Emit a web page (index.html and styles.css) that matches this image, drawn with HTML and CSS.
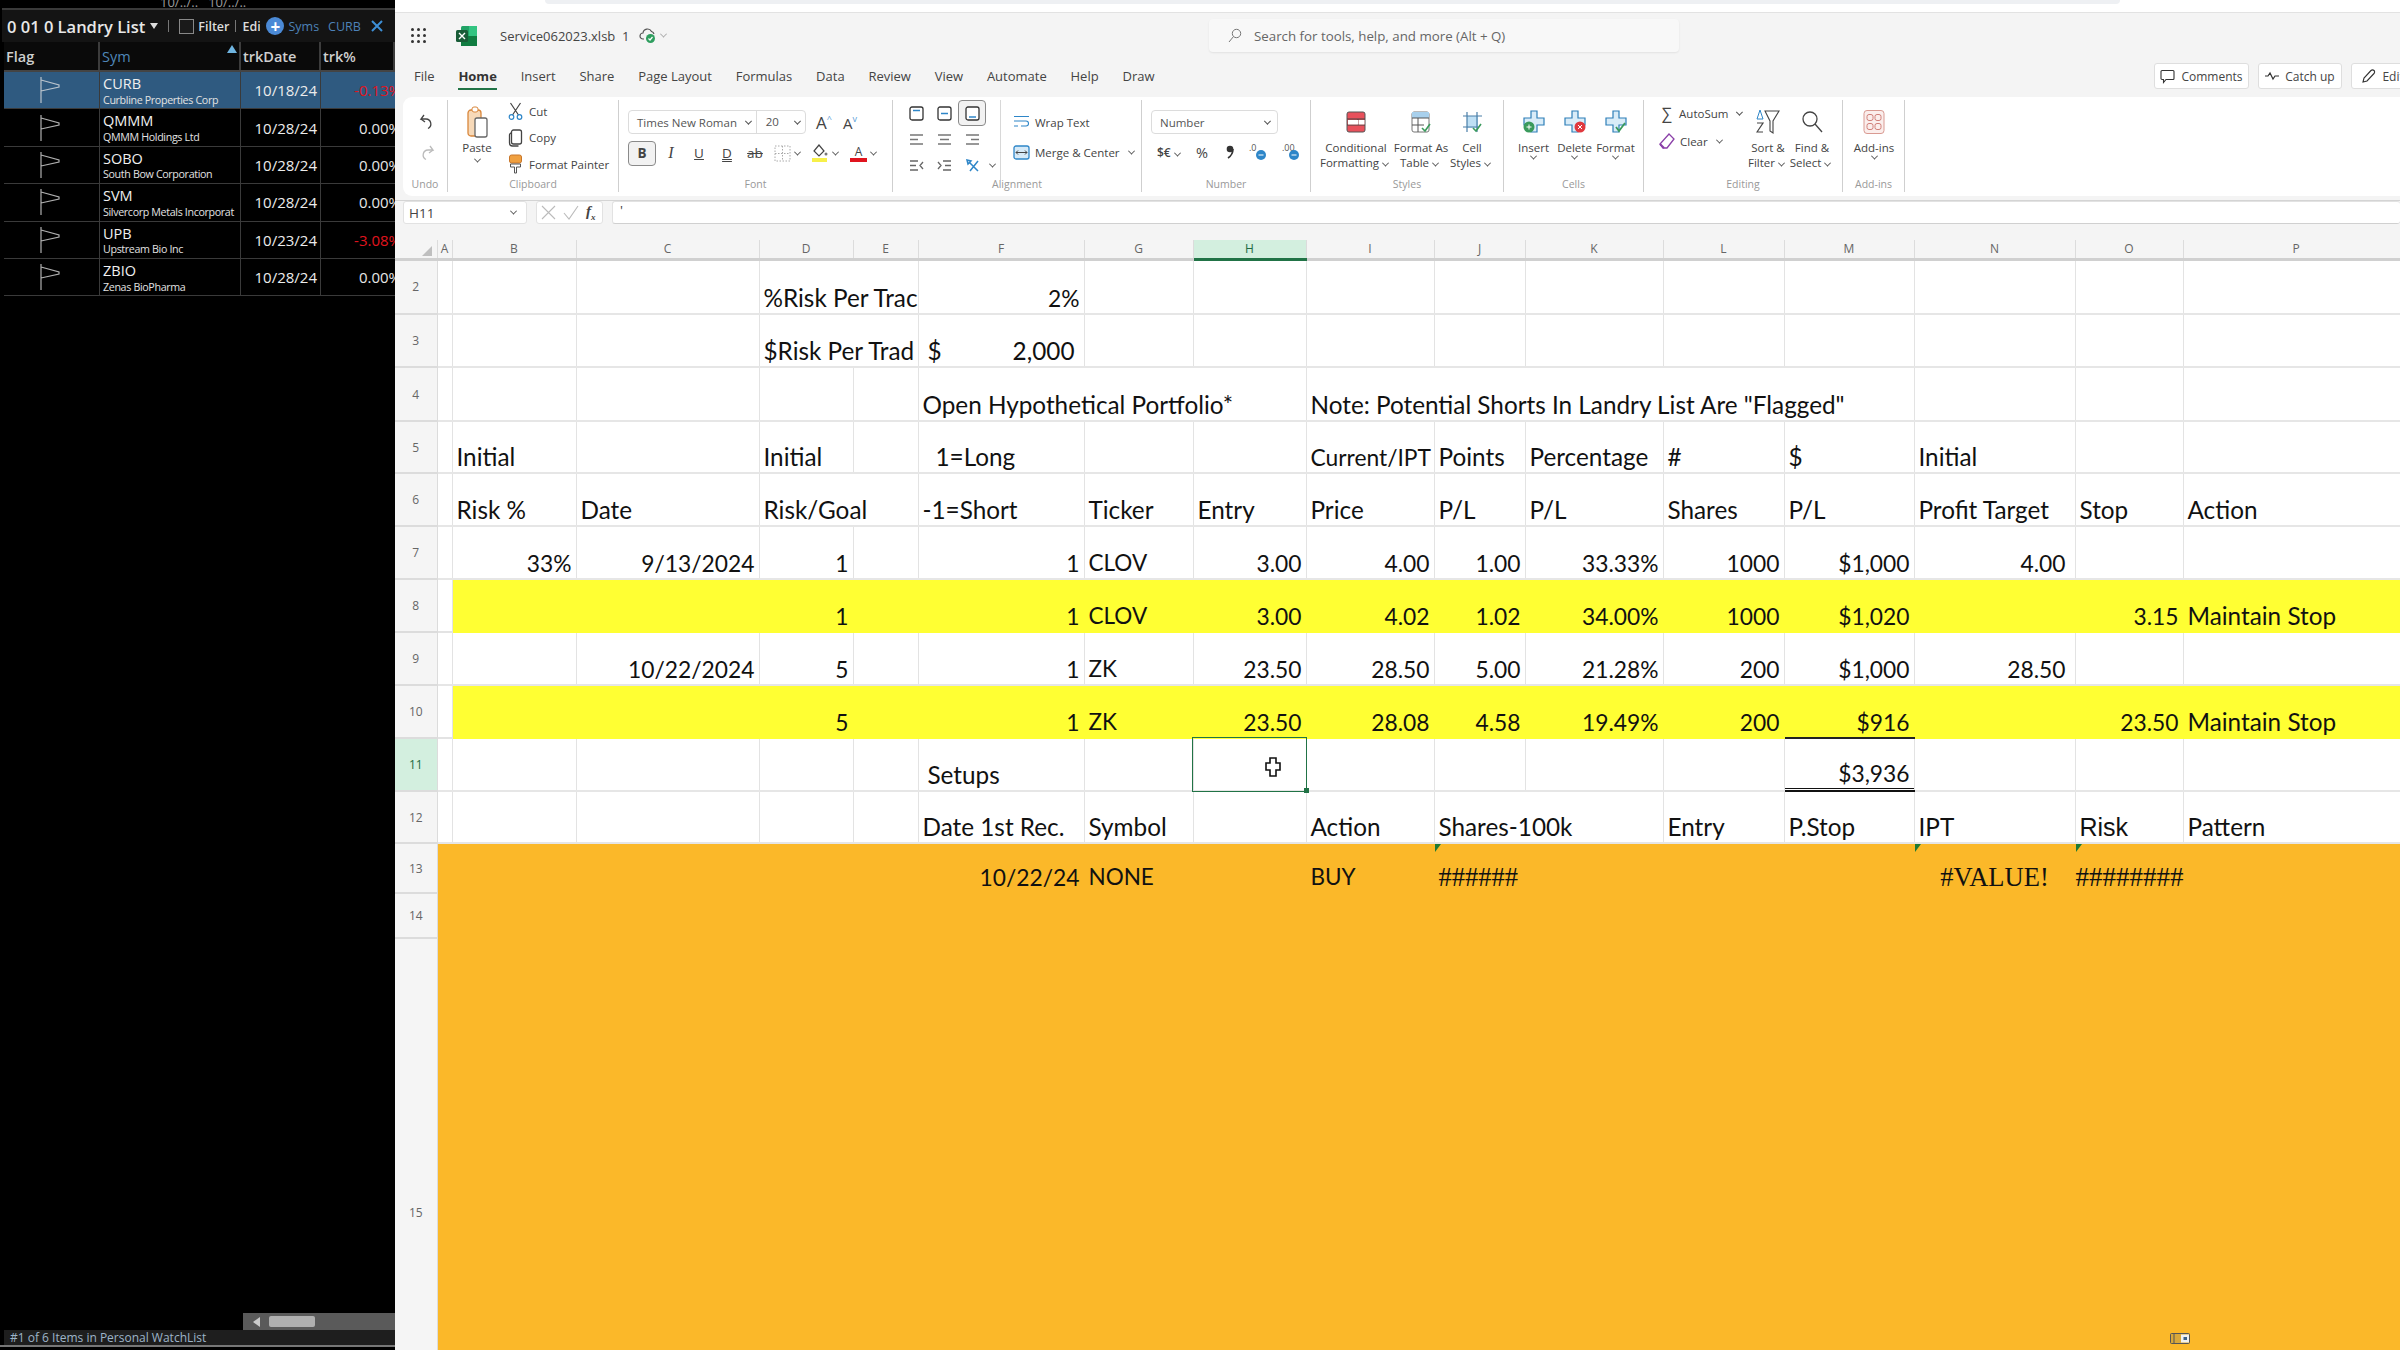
FILE: index.html
```html
<!DOCTYPE html>
<html lang="en">

<head>
  <meta charset="UTF-8">
  <title>Service062023.xlsb</title>
  <link rel="stylesheet" href="styles.css">
</head>

<body>
  <!-- watchlist -->
  <aside class="watch">
    <div class="watch-top">10/../.. &nbsp; 10/../..</div>
    <div class="watch-title">
      <span class="wl-name">0 01 0 Landry List</span><span class="wl-caret"></span>
      <span class="wl-sep"></span>
      <span class="wl-check"></span><span class="wl-txt">Filter</span>
      <span class="wl-sep short"></span>
      <span class="wl-txt edi">Edi</span>
      <span class="wl-plus">+</span>
      <span class="wl-blue syms">Syms</span>
      <span class="wl-blue curb">CURB</span>
      <svg class="wl-x" width="14" height="14" viewBox="0 0 14 14"><path d="M2 2l10 10M12 2L2 12" stroke="#3d8fd6" stroke-width="2"/></svg>
    </div>
    <div class="watch-head">
      <div class="wc flag-h">Flag</div>
      <div class="wc sym-h">Sym<span class="sort"></span></div>
      <div class="wc">trkDate</div>
      <div class="wc">trk%</div>
    </div>
    <div class="wrow sel">
      <div class="wc flag"><svg width="22" height="28" viewBox="0 0 22 28"><path d="M2 1v26M2 4l18 5v2L2 15" fill="none" stroke="#b9c3cc" stroke-width="1.2"/></svg></div>
      <div class="wc sym"><b>CURB</b><small>Curbline Properties Corp</small></div>
      <div class="wc date">10/18/24</div>
      <div class="wc pct red">-0.13%</div>
    </div>
    <div class="wrow">
      <div class="wc flag"><svg width="22" height="28" viewBox="0 0 22 28"><path d="M2 1v26M2 4l18 5v2L2 15" fill="none" stroke="#b0b0b0" stroke-width="1.2"/></svg></div>
      <div class="wc sym"><b>QMMM</b><small>QMMM Holdings Ltd</small></div>
      <div class="wc date">10/28/24</div>
      <div class="wc pct">0.00%</div>
    </div>
    <div class="wrow">
      <div class="wc flag"><svg width="22" height="28" viewBox="0 0 22 28"><path d="M2 1v26M2 4l18 5v2L2 15" fill="none" stroke="#b0b0b0" stroke-width="1.2"/></svg></div>
      <div class="wc sym"><b>SOBO</b><small>South Bow Corporation</small></div>
      <div class="wc date">10/28/24</div>
      <div class="wc pct">0.00%</div>
    </div>
    <div class="wrow">
      <div class="wc flag"><svg width="22" height="28" viewBox="0 0 22 28"><path d="M2 1v26M2 4l18 5v2L2 15" fill="none" stroke="#b0b0b0" stroke-width="1.2"/></svg></div>
      <div class="wc sym"><b>SVM</b><small>Silvercorp Metals Incorporat</small></div>
      <div class="wc date">10/28/24</div>
      <div class="wc pct">0.00%</div>
    </div>
    <div class="wrow">
      <div class="wc flag"><svg width="22" height="28" viewBox="0 0 22 28"><path d="M2 1v26M2 4l18 5v2L2 15" fill="none" stroke="#b0b0b0" stroke-width="1.2"/></svg></div>
      <div class="wc sym"><b>UPB</b><small>Upstream Bio Inc</small></div>
      <div class="wc date">10/23/24</div>
      <div class="wc pct red">-3.08%</div>
    </div>
    <div class="wrow">
      <div class="wc flag"><svg width="22" height="28" viewBox="0 0 22 28"><path d="M2 1v26M2 4l18 5v2L2 15" fill="none" stroke="#b0b0b0" stroke-width="1.2"/></svg></div>
      <div class="wc sym"><b>ZBIO</b><small>Zenas BioPharma</small></div>
      <div class="wc date">10/28/24</div>
      <div class="wc pct">0.00%</div>
    </div>
    <div class="watch-space"></div>
    <div class="hscroll"><span class="hs-arrow"></span><span class="hs-thumb"></span></div>
    <div class="watch-foot">#1 of 6 Items in Personal WatchList</div>
    <div class="watch-end"></div>
  </aside>

  <main class="excel">
    <div class="topstrip"><div class="topband"></div></div>

    <div class="titlebar">
      <div class="title-left">
        <svg class="waffle" width="17" height="17" viewBox="0 0 17 17" fill="#333"><circle cx="2.5" cy="2.5" r="1.5"/><circle cx="8.5" cy="2.5" r="1.5"/><circle cx="14.5" cy="2.5" r="1.5"/><circle cx="2.5" cy="8.5" r="1.5"/><circle cx="8.5" cy="8.5" r="1.5"/><circle cx="14.5" cy="8.5" r="1.5"/><circle cx="2.5" cy="14.5" r="1.5"/><circle cx="8.5" cy="14.5" r="1.5"/><circle cx="14.5" cy="14.5" r="1.5"/></svg>
        <svg class="xl-logo" width="22" height="20" viewBox="0 0 22 20"><rect x="5" y="0" width="16" height="20" rx="1.5" fill="#21a366"/><rect x="13" y="0" width="8" height="10" fill="#33c481"/><rect x="5" y="10" width="16" height="10" fill="#107c41"/><rect x="0" y="4" width="12" height="12" rx="1.5" fill="#185c37"/><path d="M3 7l6 6M9 7l-6 6" stroke="#fff" stroke-width="1.4"/></svg>
        <span class="filename">Service062023.xlsb&nbsp; 1</span>
        <svg class="cloud" width="18" height="17" viewBox="0 0 18 17"><path d="M5 12H4a3 3 0 0 1 0-6 4.500 4.500 0 0 1 8.500-1.500A3.500 3.500 0 0 1 15 7" fill="none" stroke="#555" stroke-width="1.200"/><circle cx="11.500" cy="11.500" r="4.500" fill="#2f9e5f"/><path d="M9.500 11.500l1.500 1.500 2.500-3" fill="none" stroke="#fff" stroke-width="1.200"/></svg>
        <span class="chev gray"></span>
      </div>
      <div class="search">
        <svg width="14" height="15" viewBox="0 0 14 15"><circle cx="8.500" cy="5.500" r="4.200" fill="none" stroke="#777" stroke-width="1"/><path d="M5.500 8.500L1 14" stroke="#777" stroke-width="1"/></svg>
        <span>Search for tools, help, and more (Alt + Q)</span>
      </div>
    </div>

    <div class="tabbar">
      <span class="tab">File</span>
      <span class="tab active">Home</span>
      <span class="tab">Insert</span>
      <span class="tab">Share</span>
      <span class="tab">Page Layout</span>
      <span class="tab">Formulas</span>
      <span class="tab">Data</span>
      <span class="tab">Review</span>
      <span class="tab">View</span>
      <span class="tab">Automate</span>
      <span class="tab">Help</span>
      <span class="tab">Draw</span>
      <div class="tab-btns">
        <span class="pill"><svg width="15" height="15" viewBox="0 0 15 15"><path d="M2 1.500h11a1 1 0 0 1 1 1v7a1 1 0 0 1-1 1H6l-2.500 3v-3H2a1 1 0 0 1-1-1v-7a1 1 0 0 1 1-1z" fill="none" stroke="#333" stroke-width="1.100"/></svg>Comments</span>
        <span class="pill"><svg width="14" height="10" viewBox="0 0 14 10"><path d="M0 5h3l2-3 3 6 2-3h4" fill="none" stroke="#333" stroke-width="1.200"/></svg>Catch up</span>
        <span class="pill edit"><svg width="15" height="15" viewBox="0 0 15 15"><path d="M2 13l1-4 7-7.500a1.500 1.500 0 0 1 3 3L6 12z" fill="none" stroke="#333" stroke-width="1.100"/></svg>Editing</span>
      </div>
    </div>

    <div class="ribbon">
      <section class="grp g-undo">
        <div class="grp-body col center undo-col">
          <svg width="16" height="17" viewBox="0 0 16 17"><path d="M5 2L2 6h5a5 5 0 0 1 2 9.500" fill="none" stroke="#444" stroke-width="1.300"/><path d="M2 6l4 3" stroke="#444" stroke-width="1.300"/></svg>
          <svg width="16" height="17" viewBox="0 0 16 17"><path d="M11 2l3 4H9a5 5 0 0 0-2 9.500" fill="none" stroke="#bbb" stroke-width="1.300"/><path d="M14 6l-4 3" stroke="#bbb" stroke-width="1.300"/></svg>
        </div>
        <div class="grp-label">Undo</div>
      </section>

      <section class="grp g-clip">
        <div class="grp-body clip-body">
          <div class="bigbtn paste">
            <svg width="21" height="32" viewBox="0 0 21 32"><rect x="1" y="4" width="13" height="26" rx="3" fill="#f7d9b8" stroke="#d9873c" stroke-width="1.300"/><rect x="5" y="1" width="6" height="5" rx="2" fill="#fff" stroke="#d9873c" stroke-width="1"/><rect x="8" y="12" width="12" height="19" rx="2" fill="#fff" stroke="#666" stroke-width="1.300"/></svg>
            <span>Paste</span><span class="chev"></span>
          </div>
          <div class="col clip-list">
            <span class="rowbtn"><svg width="16" height="18" viewBox="0 0 16 18"><path d="M3 1l8 12M13 1L5 13" stroke="#444" stroke-width="1.200"/><circle cx="4" cy="15" r="2.300" fill="none" stroke="#2e86c8" stroke-width="1.200"/><circle cx="12" cy="15" r="2.300" fill="none" stroke="#2e86c8" stroke-width="1.200"/></svg>Cut</span>
            <span class="rowbtn"><svg width="16" height="18" viewBox="0 0 16 18"><rect x="4" y="1" width="10" height="14" rx="2" fill="#fff" stroke="#444" stroke-width="1.300"/><path d="M4 4a2 2 0 0 0-2 2v8a3 3 0 0 0 3 3h6" fill="none" stroke="#444" stroke-width="1.300"/></svg>Copy</span>
            <span class="rowbtn"><svg width="16" height="20" viewBox="0 0 16 20"><rect x="2" y="1" width="12" height="8" rx="2" fill="#f0a040" stroke="#c8762a"/><path d="M3 10h10v3H9v6H7v-6H3z" fill="#fff" stroke="#555"/></svg>Format Painter</span>
          </div>
        </div>
        <div class="grp-label">Clipboard</div>
      </section>

      <section class="grp g-font">
        <div class="grp-body col font-body">
          <div class="font-row">
            <div class="selectbox fontsel"><span class="fs-name">Times New Roman</span><span class="chev"></span><span class="fs-size">20</span><span class="chev"></span></div>
            <span class="grow-a big">A<i>^</i></span>
            <span class="grow-a">A<i>v</i></span>
          </div>
          <div class="font-row tools">
            <span class="tbtn on bold">B</span>
            <span class="tbtn ital">I</span>
            <span class="tbtn under">U</span>
            <span class="tbtn dbl">D</span>
            <span class="tbtn strike">ab</span>
            <svg width="17" height="17" viewBox="0 0 17 17" class="bord"><rect x="1" y="1" width="15" height="15" fill="none" stroke="#aaa" stroke-dasharray="1.500 1.500"/><path d="M8.500 1v15M1 8.500h15" stroke="#aaa" stroke-dasharray="1.500 1.500"/></svg>
            <span class="chev"></span>
            <svg class="fill" width="18" height="20" viewBox="0 0 18 20"><path d="M8 2L3 8l5 5 5-5z" fill="none" stroke="#444" stroke-width="1.200"/><circle cx="15" cy="11" r="1.500" fill="#777"/><rect x="1" y="15" width="15" height="4" fill="#f7f04a"/></svg>
            <span class="chev"></span>
            <span class="fcolor">A</span>
            <span class="chev"></span>
          </div>
        </div>
        <div class="grp-label">Font</div>
      </section>

      <section class="grp g-align">
        <div class="grp-body align-body">
          <div class="align-grid">
            <span class="va"><svg width="15" height="15" viewBox="0 0 15 15"><rect x="1" y="1" width="13" height="13" rx="2" fill="#fff" stroke="#333" stroke-width="1.300"/><path d="M4 4.500h7" stroke="#2e86c8" stroke-width="1.500"/></svg></span>
            <span class="va"><svg width="15" height="15" viewBox="0 0 15 15"><rect x="1" y="1" width="13" height="13" rx="2" fill="#fff" stroke="#333" stroke-width="1.300"/><path d="M4 7.500h7" stroke="#2e86c8" stroke-width="1.500"/></svg></span>
            <span class="va on"><svg width="15" height="15" viewBox="0 0 15 15"><rect x="1" y="1" width="13" height="13" rx="2" fill="#fff" stroke="#333" stroke-width="1.300"/><path d="M4 11h7" stroke="#2e86c8" stroke-width="1.500"/></svg></span>
            <span class="va"><svg width="15" height="13" viewBox="0 0 15 13"><path d="M1 2h13M1 6.500h8M1 11h13" stroke="#777" stroke-width="1.400"/></svg></span>
            <span class="va"><svg width="15" height="13" viewBox="0 0 15 13"><path d="M1 2h13M3 6.500h9M1 11h13" stroke="#777" stroke-width="1.400"/></svg></span>
            <span class="va"><svg width="15" height="13" viewBox="0 0 15 13"><path d="M1 2h13M6 6.500h8M1 11h13" stroke="#777" stroke-width="1.400"/></svg></span>
            <span class="va"><svg width="15" height="13" viewBox="0 0 15 13"><path d="M1 2h8M1 6.500h6M1 11h8M14 3l-3 3.500 3 3.500" fill="none" stroke="#666" stroke-width="1.300"/></svg></span>
            <span class="va"><svg width="15" height="13" viewBox="0 0 15 13"><path d="M6 2h8M8 6.500h6M6 11h8M1 3l3 3.500-3 3.500" fill="none" stroke="#666" stroke-width="1.300"/></svg></span>
            <span class="va orient"><svg width="15" height="15" viewBox="0 0 15 15"><path d="M2 2l4 1-3 3zM4 4l9 9M13 3L5 13" fill="none" stroke="#2e86c8" stroke-width="1.500"/></svg><span class="chev"></span></span>
          </div>
          <div class="col align-list">
            <span class="rowbtn"><svg width="17" height="14" viewBox="0 0 17 14"><path d="M1 1.500h15M1 6h12a2.500 2.500 0 0 1 0 5H8M1 11h4" fill="none" stroke="#2e86c8" stroke-width="1.100"/></svg>Wrap Text</span>
            <span class="rowbtn"><svg width="17" height="15" viewBox="0 0 17 15"><rect x="1" y="1" width="15" height="13" rx="2" fill="#d6eaf8" stroke="#2e86c8" stroke-width="1.300"/><path d="M3 7.500h11M5 5.500l-2 2 2 2M12 5.500l2 2-2 2" fill="none" stroke="#444"/></svg>Merge &amp; Center<span class="chev"></span></span>
          </div>
        </div>
        <div class="grp-label">Alignment</div>
      </section>

      <section class="grp g-num">
        <div class="grp-body col num-body">
          <div class="selectbox numsel"><span class="fs-name">Number</span><span class="chev"></span></div>
          <div class="num-tools">
            <span class="dollar">$€<span class="chev"></span></span>
            <span class="pcnt">%</span>
            <svg class="comma" width="8" height="14" viewBox="0 0 8 14"><circle cx="4" cy="4" r="3.300" fill="#333"/><path d="M7 4c0 4-2 7-5 9" fill="none" stroke="#333" stroke-width="1.600"/></svg>
            <svg class="dec" width="18" height="18" viewBox="0 0 18 18"><text x="0" y="8" font-size="9" fill="#555" font-family="Open Sans">.0</text><circle cx="12" cy="12" r="5" fill="#2e86c8"/><path d="M9.500 12h5" stroke="#fff"/></svg>
            <svg class="dec" width="18" height="18" viewBox="0 0 18 18"><text x="0" y="8" font-size="9" fill="#555" font-family="Open Sans">.00</text><circle cx="12" cy="12" r="5" fill="#2e86c8"/><path d="M9.500 12h5" stroke="#fff"/></svg>
          </div>
        </div>
        <div class="grp-label">Number</div>
      </section>

      <section class="grp g-styles">
        <div class="grp-body bigs">
          <div class="bigbtn w70">
            <svg width="20" height="22" viewBox="0 0 20 22"><rect x="1" y="1" width="18" height="20" rx="2" fill="#e8505b" stroke="#555"/><path d="M1 8h18M1 14h18M12 8v6" stroke="#444"/><rect x="2" y="9" width="10" height="4.500" fill="#fff"/><rect x="12.500" y="9" width="6" height="4.500" fill="#fff"/></svg>
            <span>Conditional</span><span>Formatting<span class="chev"></span></span>
          </div>
          <div class="bigbtn w60">
            <svg width="20" height="22" viewBox="0 0 20 22"><rect x="1" y="1" width="17" height="20" rx="2" fill="#fff" stroke="#777"/><rect x="1" y="1" width="17" height="6" fill="#a8d0ec"/><path d="M1 7h17M1 14h12M7 7v14" stroke="#555"/><path d="M11 17l3 3 5-7" fill="none" stroke="#3a9a5c" stroke-width="1.600"/></svg>
            <span>Format As</span><span>Table<span class="chev"></span></span>
          </div>
          <div class="bigbtn w50">
            <svg width="21" height="22" viewBox="0 0 21 22"><rect x="5" y="5" width="11" height="12" fill="#bfe0f5"/><path d="M5 1v20M15 1v20M1 5h19M1 16h15" stroke="#4a7fa8" stroke-width="1.200"/><path d="M11 17l3 3 5-7" fill="none" stroke="#3a9a5c" stroke-width="1.600"/></svg>
            <span>Cell</span><span>Styles<span class="chev"></span></span>
          </div>
        </div>
        <div class="grp-label">Styles</div>
      </section>

      <section class="grp g-cells">
        <div class="grp-body bigs cells">
          <div class="bigbtn w40">
            <svg width="22" height="24" viewBox="0 0 22 24"><path d="M8 1h6v7h7v7h-7v7H8v-7H1V8h7z" fill="#d9ecf8" stroke="#2e7fb8" stroke-width="1.200"/><circle cx="6" cy="17" r="5.500" fill="#3a9a5c"/><path d="M3.500 17h5M6 14.500v5" stroke="#fff"/></svg>
            <span>Insert</span><span class="chev"></span>
          </div>
          <div class="bigbtn w40">
            <svg width="22" height="24" viewBox="0 0 22 24"><path d="M8 1h6v7h7v7h-7v7H8v-7H1V8h7z" fill="#d9ecf8" stroke="#2e7fb8" stroke-width="1.200"/><circle cx="16" cy="17" r="5.500" fill="#e0383e"/><path d="M14 15l4 4M18 15l-4 4" stroke="#fff"/></svg>
            <span>Delete</span><span class="chev"></span>
          </div>
          <div class="bigbtn w40">
            <svg width="22" height="24" viewBox="0 0 22 24"><path d="M8 1h6v7h7v7h-7v7H8v-7H1V8h7z" fill="#d9ecf8" stroke="#2e7fb8" stroke-width="1.200"/><path d="M11 17l3 4 6-8" fill="none" stroke="#3a9a5c" stroke-width="1.800"/></svg>
            <span>Format</span><span class="chev"></span>
          </div>
        </div>
        <div class="grp-label">Cells</div>
      </section>

      <section class="grp g-edit">
        <div class="grp-body edit-body">
          <div class="col edit-list">
            <span class="rowbtn"><span class="sigma">∑</span>AutoSum<span class="chev"></span></span>
            <span class="rowbtn"><svg width="16" height="17" viewBox="0 0 16 17"><path d="M10 1l5 5-7 9H4l-3-4z" fill="#fff" stroke="#8a3fa8" stroke-width="1.300"/><path d="M1 11l4 4" stroke="#8a3fa8" stroke-width="2"/></svg>Clear<span class="chev"></span></span>
          </div>
          <div class="bigbtn w42">
            <svg width="24" height="26" viewBox="0 0 24 26"><path d="M9 2h14l-6 10v12l-3-2V12z" fill="#fff" stroke="#444" stroke-width="1.100"/><path d="M4 1l-3 9h6z" fill="none" stroke="#2e86c8"/><path d="M1 14h6l-6 9h6" fill="none" stroke="#444" stroke-width="1.200"/></svg>
            <span>Sort &amp;</span><span>Filter<span class="chev"></span></span>
          </div>
          <div class="bigbtn w42">
            <svg width="22" height="24" viewBox="0 0 22 24"><circle cx="9" cy="9" r="7" fill="none" stroke="#444" stroke-width="1.300"/><path d="M14 14l7 8" stroke="#444" stroke-width="1.300"/></svg>
            <span>Find &amp;</span><span>Select<span class="chev"></span></span>
          </div>
        </div>
        <div class="grp-label">Editing</div>
      </section>

      <section class="grp g-add">
        <div class="grp-body bigs">
          <div class="bigbtn w50">
            <svg width="22" height="25" viewBox="0 0 22 25"><rect x="1" y="1" width="20" height="23" rx="3" fill="#fbeeec" stroke="#d99a92"/><rect x="4" y="5" width="6" height="6" rx="2" fill="none" stroke="#d0807a"/><rect x="12" y="5" width="6" height="6" rx="2" fill="none" stroke="#d0807a"/><rect x="4" y="14" width="6" height="6" rx="2" fill="none" stroke="#d0807a"/><rect x="12" y="14" width="6" height="6" rx="2" fill="none" stroke="#d0807a"/></svg>
            <span>Add-ins</span><span class="chev"></span>
          </div>
        </div>
        <div class="grp-label">Add-ins</div>
      </section>
    </div>

    <div class="formulabar">
      <div class="namebox"><span>H11</span><span class="chev"></span></div>
      <div class="fxbox">
        <svg width="15" height="15" viewBox="0 0 15 15"><path d="M1 1l13 13M14 1L1 14" stroke="#bbb" stroke-width="1.100"/></svg>
        <svg width="16" height="15" viewBox="0 0 16 15"><path d="M1 8l5 6 9-13" fill="none" stroke="#bbb" stroke-width="1.100"/></svg>
        <span class="fx">f<sub>x</sub></span>
      </div>
      <div class="finput">'</div>
    </div>

    <div class="sheet">
      <table>
        <colgroup>
          <col class="c-hd"><col class="c-a"><col class="c-b"><col class="c-c"><col class="c-d"><col class="c-e"><col class="c-f"><col class="c-g"><col class="c-h"><col class="c-i"><col class="c-j"><col class="c-k"><col class="c-l"><col class="c-m"><col class="c-n"><col class="c-o"><col class="c-p">
        </colgroup>
        <thead>
          <tr>
            <th class="corner"><span class="tri"></span></th>
            <th>A</th><th>B</th><th>C</th><th>D</th><th>E</th><th>F</th><th>G</th><th class="cur">H</th><th>I</th><th>J</th><th>K</th><th>L</th><th>M</th><th>N</th><th>O</th><th>P</th>
          </tr>
        </thead>
        <tbody>
          <tr class="h55"><th>2</th><td></td><td></td><td></td><td colspan="2">%Risk Per Trac</td><td class="r">2%</td><td></td><td></td><td></td><td></td><td></td><td></td><td></td><td></td><td></td><td></td></tr>
          <tr class="h53"><th>3</th><td></td><td></td><td></td><td colspan="2">$Risk Per Trad</td><td class="acct"><span>$</span><span>2,000</span></td><td></td><td></td><td></td><td></td><td></td><td></td><td></td><td></td><td></td><td></td></tr>
          <tr class="h54"><th>4</th><td></td><td></td><td></td><td></td><td></td><td colspan="3">Open Hypothetical Portfolio*</td><td colspan="5">Note: Potential Shorts In Landry List Are "Flagged"</td><td></td><td></td><td></td></tr>
          <tr class="h52"><th>5</th><td></td><td>Initial</td><td></td><td>Initial</td><td></td><td class="ind">1=Long</td><td></td><td></td><td class="fit">Current/IPT</td><td>Points</td><td>Percentage</td><td>#</td><td>$</td><td>Initial</td><td></td><td></td></tr>
          <tr class="h53"><th>6</th><td></td><td>Risk %</td><td>Date</td><td colspan="2">Risk/Goal</td><td>-1=Short</td><td>Ticker</td><td>Entry</td><td>Price</td><td>P/L</td><td>P/L</td><td>Shares</td><td>P/L</td><td>Profit Target</td><td>Stop</td><td>Action</td></tr>
          <tr class="h53"><th>7</th><td></td><td class="r">33%</td><td class="r">9/13/2024</td><td class="r">1</td><td></td><td class="r">1</td><td class="caps">CLOV</td><td class="r">3.00</td><td class="r">4.00</td><td class="r">1.00</td><td class="r">33.33%</td><td class="r">1000</td><td class="r">$1,000</td><td class="r pad-n">4.00</td><td></td><td></td></tr>
          <tr class="h53 hl"><th>8</th><td class="a"></td><td></td><td></td><td class="r">1</td><td></td><td class="r">1</td><td class="caps">CLOV</td><td class="r">3.00</td><td class="r">4.02</td><td class="r">1.02</td><td class="r">34.00%</td><td class="r">1000</td><td class="r">$1,020</td><td></td><td class="r">3.15</td><td>Maintain Stop</td></tr>
          <tr class="h53"><th>9</th><td></td><td></td><td class="r">10/22/2024</td><td class="r">5</td><td></td><td class="r">1</td><td class="caps">ZK</td><td class="r">23.50</td><td class="r">28.50</td><td class="r">5.00</td><td class="r">21.28%</td><td class="r">200</td><td class="r">$1,000</td><td class="r pad-n">28.50</td><td></td><td></td></tr>
          <tr class="h53 hl"><th>10</th><td class="a"></td><td></td><td></td><td class="r">5</td><td></td><td class="r">1</td><td class="caps">ZK</td><td class="r">23.50</td><td class="r">28.08</td><td class="r">4.58</td><td class="r">19.49%</td><td class="r">200</td><td class="r sub">$916</td><td></td><td class="r">23.50</td><td>Maintain Stop</td></tr>
          <tr class="h53"><th class="cur">11</th><td></td><td></td><td></td><td></td><td></td><td class="ind2">Setups</td><td></td><td class="active"><span class="handle"></span><svg class="cursor" width="16" height="20" viewBox="0 0 16 20"><path d="M5 1h6v5h4v7h-4v6H5v-6H1V6h4z" fill="#fff" stroke="#111" stroke-width="1.600"/></svg></td><td></td><td></td><td></td><td></td><td class="r total">$3,936</td><td></td><td></td><td></td></tr>
          <tr class="h52"><th>12</th><td></td><td></td><td></td><td></td><td></td><td>Date 1st Rec.</td><td>Symbol</td><td></td><td>Action</td><td colspan="2">Shares-100k</td><td>Entry</td><td>P.Stop</td><td>IPT</td><td class="risk">Risk</td><td>Pattern</td></tr>
          <tr class="h50 or"><th>13</th><td></td><td></td><td></td><td></td><td></td><td class="r">10/22/24</td><td class="caps">NONE</td><td></td><td class="caps">BUY</td><td class="err mark">######</td><td></td><td></td><td></td><td class="err mark ctr">#VALUE!</td><td class="err mark tight">########</td><td></td></tr>
          <tr class="h45 or"><th>14</th><td colspan="16"></td></tr>
          <tr class="h549 or"><th>15</th><td colspan="16"></td></tr>
        </tbody>
      </table>
      <svg class="sheet-mark" width="20" height="11" viewBox="0 0 20 11"><rect x="0.500" y="0.500" width="19" height="10" rx="1" fill="#d9a83a" stroke="#555"/><rect x="11" y="1.500" width="8" height="8" fill="#f1f1f1"/><rect x="13.500" y="4" width="3.500" height="3" fill="#3b5f86"/><path d="M4 1v9" stroke="#555"/></svg>
    </div>
  </main>
</body>

</html>
```

FILE: styles.css
```css
* {
  box-sizing: border-box;
}

html, body {
  margin: 0;
  height: 100%;
}

body {
  display: flex;
  width: 2400px;
  height: 1350px;
  overflow: hidden;
  background: #f4f4f4;
  font-family: "Open Sans", "Noto Sans", sans-serif;
}

/* left watchlist */
.watch {
  display: flex;
  flex-direction: column;
  width: 395px;
  flex: none;
  background: #000;
  color: #e6e6e6;
  overflow: hidden;
}

.watch-top {
  height: 8px;
  overflow: hidden;
  line-height: 4px;
  padding-left: 160px;
  font-size: 13px;
  color: #999;
}

.watch-title {
  display: flex;
  align-items: center;
  height: 34px;
  margin-left: 2px;
  padding-left: 5px;
  border-top: 2px solid #3a3a3a;
  background: #141414;
  white-space: nowrap;
}

.wl-name {
  font-size: 16.5px;
  font-weight: 600;
  color: #e8e8e8;
}

.wl-caret {
  width: 0;
  height: 0;
  margin-left: 5px;
  border-left: 4.5px solid transparent;
  border-right: 4.5px solid transparent;
  border-top: 6px solid #ddd;
}

.wl-sep {
  width: 1px;
  height: 12px;
  margin: 0 10px;
  background: #777;
}

.wl-sep.short {
  margin: 0 6px 0 6px;
}

.wl-check {
  width: 15px;
  height: 15px;
  margin-right: 4px;
  border: 1px solid #888;
  background: #1a1a1a;
}

.wl-txt {
  font-size: 12.500px;
  font-weight: 600;
  color: #ddd;
}

.wl-txt.edi {
  width: 18px;
  overflow: hidden;
}

.wl-plus {
  display: flex;
  align-items: center;
  justify-content: center;
  width: 18px;
  height: 18px;
  margin-left: 6px;
  border-radius: 50%;
  background: #4b8ad6;
  color: #fff;
  font-size: 17px;
  font-weight: 700;
  line-height: 1;
}

.wl-blue {
  font-size: 12.500px;
  color: #4d82b8;
}

.syms {
  margin-left: 4px;
}

.curb {
  margin-left: 9px;
}

.wl-x {
  margin-left: 9px;
}

.watch-head,
.wrow {
  display: grid;
  grid-template-columns: 96px 141px 80px 74px;
  margin-left: 4px;
}

.watch-head {
  height: 30px;
  border-bottom: 2px solid #444;
  background: #0a0a0a;
  font-size: 14.5px;
  font-weight: 600;
  color: #cfcfcf;
}

.watch-head .wc {
  display: flex;
  align-items: center;
  position: relative;
  padding-left: 2px;
  border-right: 2px solid #3c3c3c;
}

.watch-head .sym-h {
  color: #4f86b8;
  font-weight: 400;
}

.sort {
  position: absolute;
  top: 3px;
  right: 2px;
  border-left: 5px solid transparent;
  border-right: 5px solid transparent;
  border-bottom: 8px solid #6fb4e0;
}

.wrow {
  height: 37.400px;
  border-bottom: 1.500px solid #3a3a3a;
}

.wrow.sel {
  background: #2f5a80;
}

.wrow .wc {
  display: flex;
  align-items: center;
  overflow: hidden;
  white-space: nowrap;
  border-right: 1.500px solid #3a3a3a;
}

.wrow .flag {
  justify-content: center;
  padding-right: 4px;
}

.wrow .sym {
  flex-direction: column;
  align-items: flex-start;
  justify-content: center;
  padding: 2px 0 0 3px;
  line-height: 1;
}

.sym b {
  font-size: 14.500px;
  font-weight: 400;
  color: #f0f0f0;
}

.sym small {
  margin-top: 3px;
  font-size: 10.700px;
  letter-spacing: -0.350px;
  color: #e2e2e2;
}

.wrow .date {
  justify-content: flex-end;
  padding-right: 3px;
  font-size: 15px;
  color: #ececec;
}

.wrow .pct {
  justify-content: flex-end;
  margin-right: -6px;
  padding-right: 0;
  border-right: none;
  font-size: 15px;
  color: #e6e6e6;
}

.wrow .pct.red {
  color: #e0141e;
}

.watch-space {
  flex: 1;
}

.hscroll {
  display: flex;
  align-items: center;
  height: 17px;
  margin-left: 243px;
  background: #5a5a5a;
}

.hs-arrow {
  margin-left: 10px;
  border-top: 5px solid transparent;
  border-bottom: 5px solid transparent;
  border-right: 7px solid #ccc;
}

.hs-thumb {
  width: 46px;
  height: 11px;
  margin-left: 9px;
  border-radius: 2px;
  background: #b0b0b0;
}

.watch-foot {
  height: 15px;
  margin-left: 4px;
  padding-left: 6px;
  background: #1e1e1e;
  font-size: 12px;
  line-height: 15px;
  color: #9db4c8;
}

.watch-end {
  height: 5px;
  border-top: 2px solid #777;
}

/* excel */
.excel {
  display: flex;
  flex-direction: column;
  flex: 1;
  min-width: 0;
  overflow: hidden;
  background: #f4f4f4;
  color: #444;
}

.topstrip {
  flex: none;
  height: 13px;
  padding-bottom: 8px;
  border-bottom: 1px solid #e2e2e2;
  background: #fff;
}

.topband {
  height: 4px;
  margin: 0 280px 0 150px;
  border-radius: 0 0 4px 4px;
  background: #eef0f3;
}

.titlebar {
  display: flex;
  align-items: center;
  flex: none;
  height: 47px;
  padding-bottom: 2px;
}

.title-left {
  display: flex;
  align-items: center;
  width: 814px;
  padding-left: 15px;
}

.xl-logo {
  margin-left: 29px;
}

.filename {
  margin-left: 22px;
  font-size: 13px;
  color: #444;
}

.cloud {
  margin-left: 10px;
}

.chev {
  display: inline-block;
  width: 5px;
  height: 5px;
  margin: 0 4px;
  border-right: 1.300px solid #555;
  border-bottom: 1.300px solid #555;
  transform: rotate(45deg) translate(-1px, -1px);
}

.chev.gray {
  border-color: #aaa;
}

.search {
  display: flex;
  align-items: center;
  gap: 12px;
  width: 470px;
  height: 33px;
  padding-left: 19px;
  border-radius: 4px;
  background: #f8f8f8;
  box-shadow: 0 1px 2px rgba(0, 0, 0, .08);
  font-size: 13.300px;
  color: #666;
}

.tabbar {
  display: flex;
  align-items: center;
  gap: 23.800px;
  flex: none;
  height: 37px;
  padding: 0 0 5px 19px;
  font-size: 13px;
}

.tab {
  position: relative;
  color: #444;
}

.tab.active {
  font-weight: 700;
  color: #333;
}

.tab.active::after {
  content: '';
  position: absolute;
  left: 0;
  right: 0;
  bottom: -5px;
  height: 2px;
  background: #217346;
}

.tab-btns {
  display: flex;
  gap: 9px;
  margin-left: auto;
  margin-right: -31px;
}

.pill {
  display: flex;
  align-items: center;
  justify-content: center;
  gap: 6px;
  width: 95px;
  height: 26px;
  border: 1px solid #dedede;
  border-radius: 3px;
  background: #fff;
  font-size: 12px;
  color: #444;
  white-space: nowrap;
}

.pill:nth-child(2) {
  width: 84px;
}

.pill.edit {
  width: 80px;
}

.ribbon {
  display: flex;
  flex: none;
  height: 99px;
  margin-left: 8px;
  padding-top: 3px;
  border-radius: 9px 0 0 9px;
  background: #fff;
  font-size: 11.500px;
  color: #444;
}

.grp {
  display: flex;
  flex-direction: column;
  flex: none;
  height: 92px;
  border-right: 1.500px solid #cfcfcf;
}

.grp-body {
  flex: 1;
  min-height: 0;
}

.grp-label {
  flex: none;
  height: 16px;
  text-align: center;
  font-size: 10.500px;
  line-height: 16px;
  color: #999;
}

.col {
  display: flex;
  flex-direction: column;
}

.center {
  align-items: center;
}

.g-undo { width: 45px; }
.g-clip { width: 171px; }
.g-font { width: 274px; }
.g-align { width: 249px; }
.g-num { width: 169px; }
.g-styles { width: 193px; }
.g-cells { width: 140px; }
.g-edit { width: 199px; }
.g-add { width: 62px; }

.undo-col {
  gap: 14px;
  padding: 13px 0 0 3px;
}

.clip-body {
  display: flex;
  gap: 9px;
  padding-left: 8px;
}

.bigbtn {
  display: flex;
  flex-direction: column;
  align-items: center;
  white-space: nowrap;
  line-height: 15px;
}

.bigbtn svg {
  height: 32px;
  margin: 6px 0 2px;
}

.paste {
  width: 42px;
}

.paste .chev {
  margin-top: 3px;
}

.clip-list {
  gap: 8.500px;
  padding-top: 2px;
}

.rowbtn {
  display: flex;
  align-items: center;
  gap: 5px;
  height: 18px;
  white-space: nowrap;
}

.rowbtn svg {
  flex: none;
}

.clip-list .rowbtn svg {
  width: 17px;
}

.font-body {
  gap: 6px;
  padding: 10px 0 0 9px;
}

.font-row {
  display: flex;
  align-items: center;
}

.selectbox {
  display: flex;
  align-items: center;
  height: 24px;
  border: 1px solid #dcdcdc;
  border-radius: 4px;
  background: #fff;
  font-size: 11.500px;
  color: #555;
}

.fontsel {
  width: 178px;
}

.fs-name {
  width: 119px;
  padding-left: 8px;
  white-space: nowrap;
}

.fontsel .chev {
  margin: 0 5px 0 4px;
}

.fs-size {
  width: 37px;
  padding-left: 9px;
  border-left: 1px solid #dcdcdc;
  line-height: 22px;
}

.grow-a {
  margin-left: 11px;
  font-size: 15px;
  line-height: 1;
  color: #444;
}

.grow-a.big {
  margin-left: 10px;
  font-size: 17px;
}

.grow-a i {
  vertical-align: 7px;
  font-size: 9px;
  font-style: normal;
  color: #5aa0d8;
}

.tools {
  height: 26px;
}

.tbtn {
  display: inline-flex;
  align-items: center;
  justify-content: center;
  width: 20px;
  margin-right: 8px;
  font-size: 13.500px;
  color: #444;
}

.tbtn.on {
  width: 28px;
  height: 25px;
  margin-right: 5px;
  border: 1.500px solid #8a8a8a;
  border-radius: 4px;
  background: #f2f2f2;
}

.bold {
  font-weight: 700;
}

.ital {
  font-family: "Liberation Serif", serif;
  font-size: 16px;
  font-style: italic;
}

.under {
  text-decoration: underline;
}

.dbl {
  text-decoration: underline double;
}

.strike {
  text-decoration: line-through;
}

.bord {
  margin-left: 1px;
}

.fill {
  margin-left: 7px;
}

.fcolor {
  width: 17px;
  margin-left: 8px;
  border-bottom: 4px solid #e0141e;
  text-align: center;
  font-size: 12px;
  line-height: 13px;
}

.align-body {
  display: flex;
}

.align-grid {
  display: grid;
  grid-template-columns: repeat(3, 28px);
  grid-auto-rows: 26px;
  width: 108px;
  height: 80px;
  padding-left: 9px;
  border-right: 1px solid #d8d8d8;
  margin-right: 12px;
}

.va {
  display: flex;
  align-items: center;
  justify-content: center;
}

.va.on {
  border: 1.500px solid #8a8a8a;
  border-radius: 4px;
  background: #f2f2f2;
}

.orient {
  position: relative;
}

.orient .chev {
  position: absolute;
  left: 28px;
}

.align-list {
  gap: 12px;
  padding-top: 13px;
}

.num-body {
  gap: 4px;
  padding: 10px 0 0 9px;
}

.numsel {
  justify-content: space-between;
  width: 127px;
  padding-right: 3px;
}

.num-tools {
  display: flex;
  align-items: center;
  height: 28px;
  padding-left: 6px;
}

.dollar {
  width: 39px;
  font-size: 12px;
  font-weight: 600;
}

.pcnt {
  width: 28px;
  font-size: 14.500px;
}

.comma {
  margin-left: 2px;
}

.dec {
  margin-left: 15px;
}

.bigs {
  display: flex;
  padding-left: 8px;
}

.w70 { width: 74px; }
.w60 { width: 56px; }
.w50 { width: 46px; }
.w40 { width: 41px; }
.w42 { width: 44px; }

.cells {
  padding-left: 9px;
}

.edit-body {
  display: flex;
  padding-left: 15px;
}

.edit-list {
  gap: 10px;
  width: 87px;
  padding-top: 4px;
}

.sigma {
  width: 17px;
  font-size: 16px;
  text-align: center;
}

.g-add .bigs {
  padding-left: 8px;
}

.formulabar {
  display: flex;
  gap: 9px;
  flex: none;
  height: 40px;
  margin-top: 4px;
  padding: 0 0 16px 8px;
  border-top: 1.500px solid #d4d4d4;
  font-size: 13.500px;
  color: #444;
}

.namebox,
.fxbox,
.finput {
  display: flex;
  align-items: center;
  border: 1px solid #e2e2e2;
  border-radius: 3px;
  background: #fff;
}

.namebox {
  justify-content: space-between;
  width: 124px;
  padding: 0 6px 0 5px;
}

.fxbox {
  gap: 7px;
  width: 67px;
  padding-left: 4px;
}

.fx {
  font-family: "Liberation Serif", serif;
  font-size: 15px;
  font-style: italic;
  font-weight: 700;
  line-height: 1;
}

.fx sub {
  font-size: 9px;
}

.finput {
  flex: 1;
  padding: 0 0 6px 7px;
  border-right: none;
  border-bottom: 1px solid #d0d0d0;
}

/* the sheet */
.sheet {
  position: relative;
  flex: 1;
  min-height: 0;
  overflow: hidden;
  background: #fff;
}

.sheet table {
  width: 2014px;
  table-layout: fixed;
  border-collapse: collapse;
  font-family: Lato, "Open Sans", sans-serif;
  font-size: 24.300px;
  color: #111;
}

.c-hd { width: 42px; }
.c-a { width: 15px; }
.c-b { width: 124px; }
.c-c { width: 183px; }
.c-d { width: 94px; }
.c-e { width: 65px; }
.c-f { width: 166px; }
.c-g { width: 109px; }
.c-h { width: 113px; }
.c-i { width: 128px; }
.c-j { width: 91px; }
.c-k { width: 138px; }
.c-l { width: 121px; }
.c-m { width: 130px; }
.c-n { width: 161px; }
.c-o { width: 108px; }
.c-p { width: 226px; }

.sheet thead tr {
  height: 19px;
}

.sheet th {
  padding: 0;
  background: #f5f5f5;
  border-right: 1px solid #dcdcdc;
  border-bottom: 2px solid #dcdcdc;
  font-family: "Open Sans", sans-serif;
  font-size: 12px;
  font-weight: 400;
  color: #666;
}

.sheet thead th {
  line-height: 17px;
  border-bottom: 3px solid #d0d0d0;
}

.sheet th.cur {
  background: #d3efdf;
  color: #1f6b42;
}

.sheet thead th.cur {
  border-bottom-color: #217346;
}

.corner {
  position: relative;
}

.tri {
  position: absolute;
  right: 5px;
  bottom: 2px;
  border-left: 10px solid transparent;
  border-bottom: 10px solid #bfbfbf;
}

.sheet td {
  padding: 0 4px 1px;
  overflow: hidden;
  border-right: 1px solid #e3e3e3;
  border-bottom: 2px solid #e6e6e6;
  vertical-align: bottom;
  white-space: nowrap;
  line-height: 28px;
}

.h55 { height: 55px; }
.h54 { height: 54px; }
.h53 { height: 53px; }
.h52 { height: 52px; }
.h50 { height: 50px; }
.h45 { height: 45px; }
.h549 { height: 549px; }

.sheet td.r {
  text-align: right;
  font-size: 22.800px;
}

.sheet td.caps {
  font-size: 22.500px;
}

.sheet td.fit {
  font-size: 22.800px;
}

.sheet td.acct {
  padding: 0 9px 1px 9px;
}

.acct span:last-child {
  float: right;
}

.sheet td.ind {
  padding-left: 17px;
}

.sheet td.ind2 {
  padding-left: 9px;
}

.sheet td.pad-n {
  padding-right: 9px;
}

.hl td {
  border-color: #ffff33;
  background: #ffff33;
}

.hl td.a {
  border-color: #e3e3e3;
  background: #fff;
}

.sheet td.sub {
  border-bottom: 2px solid #222;
}

.sheet td.total {
  padding-bottom: 3px;
  border-bottom: 2px solid #111;
  box-shadow: inset 0 -1px 0 #fff, inset 0 -2px 0 #111;
}

.sheet td.active {
  position: relative;
  overflow: visible;
  outline: 1px solid #217346;
  outline-offset: 0;
}

.handle {
  position: absolute;
  right: -3px;
  bottom: -3px;
  width: 5px;
  height: 5px;
  background: #217346;
}

.cursor {
  position: absolute;
  left: 71px;
  top: 18px;
}

.sheet td.risk {
  font-family: "Liberation Sans", sans-serif;
  font-size: 25px;
}

.or td {
  border-color: #fbb829;
  background: #fbb829;
}

.sheet td.err {
  font-family: "Liberation Serif", serif;
  font-size: 26.500px;
}

.sheet td.tight {
  padding: 0 0 1px 0;
  font-size: 27px;
  overflow: visible;
}

.sheet td.ctr {
  text-align: center;
}

.sheet td.mark {
  position: relative;
}

.mark::before {
  content: '';
  position: absolute;
  left: 0;
  top: 0;
  border-top: 8px solid #1f7a33;
  border-right: 6px solid transparent;
}

.sheet-mark {
  position: absolute;
  left: 1775px;
  top: 1093px;
}
```
